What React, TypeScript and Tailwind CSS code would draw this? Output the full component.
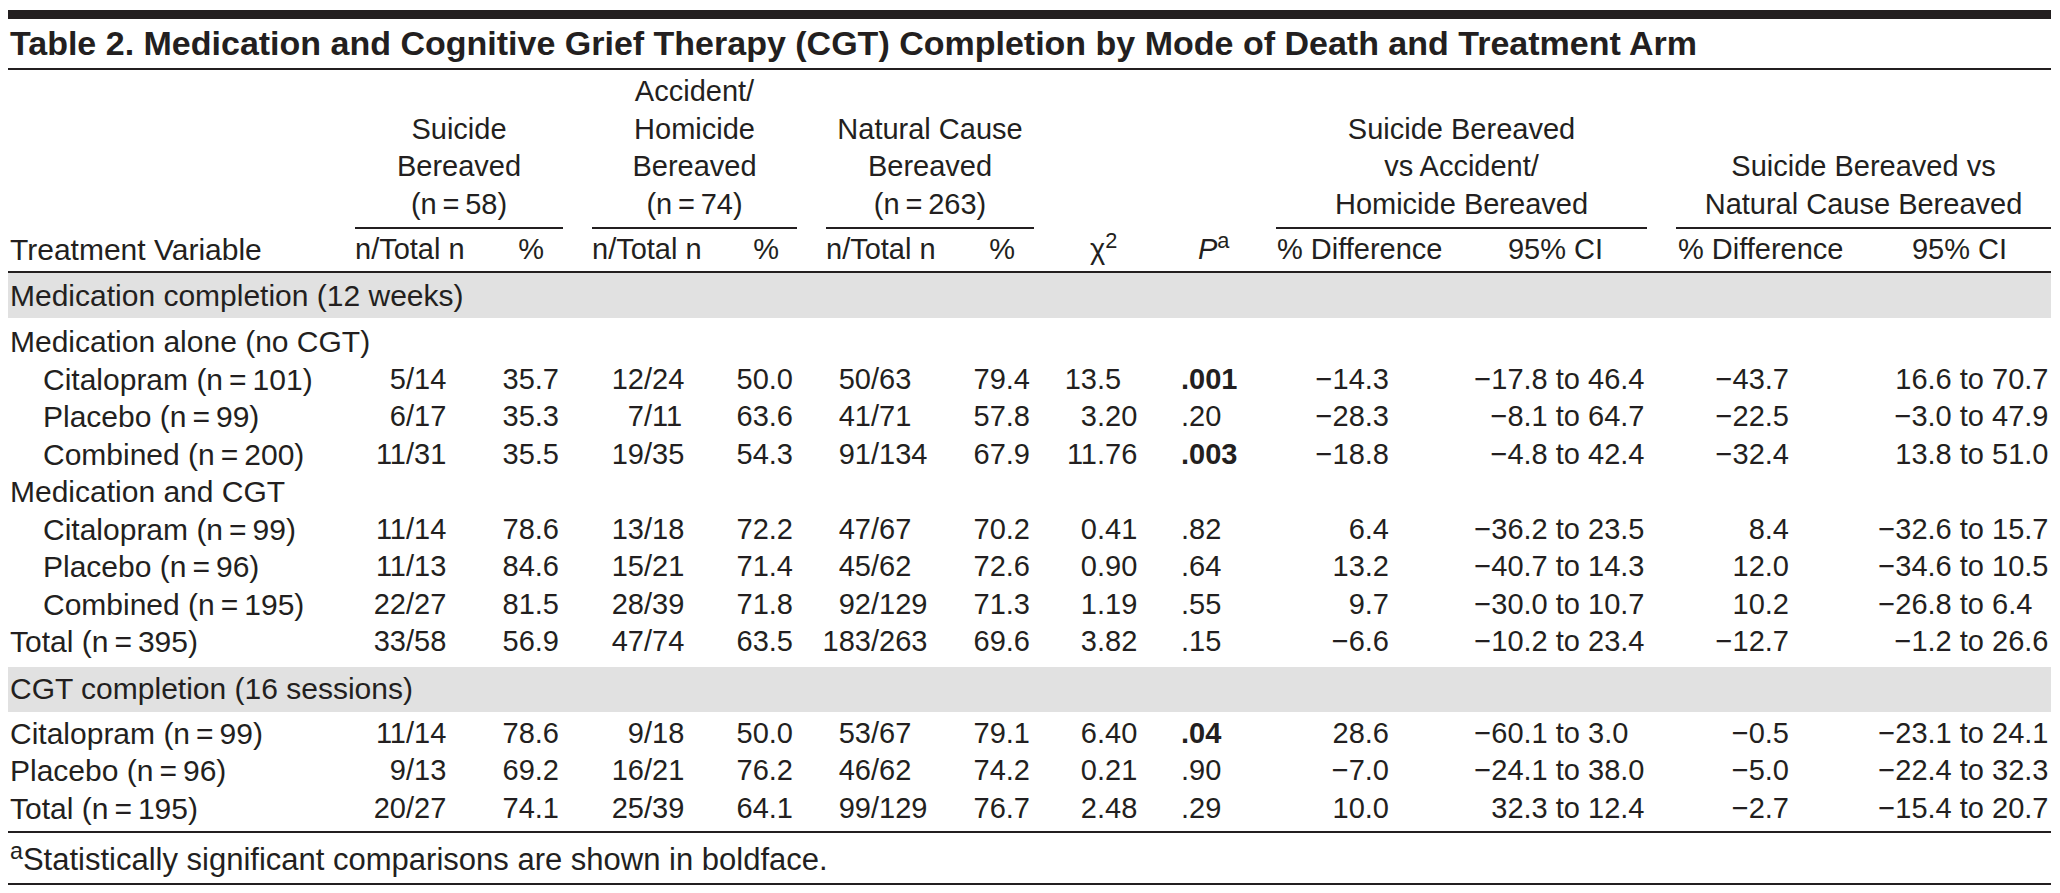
type Row = {
  label: string;
  indent?: boolean;
  v?: string[];
  bold?: boolean;
};

const GRID =
  'grid grid-cols-[347px_115px_93px_29px_116px_89px_29px_115px_93px_116px_126px_184px_187px_29px_179px_196px]';

const section1: Row[] = [
  { label: 'Medication alone (no CGT)' },
  { label: 'Citalopram (n\u2009=\u2009101)', indent: true, bold: true, v: ['5/14', '35.7', '12/24', '50.0', '50/63', '79.4', '13.5', '.001', '\u221214.3', '\u221217.8 to 46.4', '\u221243.7', '16.6 to 70.7'] },
  { label: 'Placebo (n\u2009=\u200999)', indent: true, v: ['6/17', '35.3', '7/11', '63.6', '41/71', '57.8', '3.20', '.20', '\u221228.3', '\u22128.1 to 64.7', '\u221222.5', '\u22123.0 to 47.9'] },
  { label: 'Combined (n\u2009=\u2009200)', indent: true, bold: true, v: ['11/31', '35.5', '19/35', '54.3', '91/134', '67.9', '11.76', '.003', '\u221218.8', '\u22124.8 to 42.4', '\u221232.4', '13.8 to 51.0'] },
  { label: 'Medication and CGT' },
  { label: 'Citalopram (n\u2009=\u200999)', indent: true, v: ['11/14', '78.6', '13/18', '72.2', '47/67', '70.2', '0.41', '.82', '6.4', '\u221236.2 to 23.5', '8.4', '\u221232.6 to 15.7'] },
  { label: 'Placebo (n\u2009=\u200996)', indent: true, v: ['11/13', '84.6', '15/21', '71.4', '45/62', '72.6', '0.90', '.64', '13.2', '\u221240.7 to 14.3', '12.0', '\u221234.6 to 10.5'] },
  { label: 'Combined (n\u2009=\u2009195)', indent: true, v: ['22/27', '81.5', '28/39', '71.8', '92/129', '71.3', '1.19', '.55', '9.7', '\u221230.0 to 10.7', '10.2', '\u221226.8 to 6.4'] },
  { label: 'Total (n\u2009=\u2009395)', v: ['33/58', '56.9', '47/74', '63.5', '183/263', '69.6', '3.82', '.15', '\u22126.6', '\u221210.2 to 23.4', '\u221212.7', '\u22121.2 to 26.6'] },
];

const section2: Row[] = [
  { label: 'Citalopram (n\u2009=\u200999)', bold: true, v: ['11/14', '78.6', '9/18', '50.0', '53/67', '79.1', '6.40', '.04', '28.6', '\u221260.1 to 3.0', '\u22120.5', '\u221223.1 to 24.1'] },
  { label: 'Placebo (n\u2009=\u200996)', v: ['9/13', '69.2', '16/21', '76.2', '46/62', '74.2', '0.21', '.90', '\u22127.0', '\u221224.1 to 38.0', '\u22125.0', '\u221222.4 to 32.3'] },
  { label: 'Total (n\u2009=\u2009195)', v: ['20/27', '74.1', '25/39', '64.1', '99/129', '76.7', '2.48', '.29', '10.0', '32.3 to 12.4', '\u22122.7', '\u221215.4 to 20.7'] },
];

const Frac = ({ v, w }: { v: string; w: string }) => {
  const [a, b] = v.split('/');
  return (
    <div className="flex whitespace-nowrap">
      <span className={`flex shrink-0 justify-end ${w}`}>{a}</span>
      <span>/{b}</span>
    </div>
  );
};

const Dec = ({ v }: { v: string }) => {
  const i = v.indexOf('.');
  return (
    <div className="flex whitespace-nowrap">
      <span className="flex w-[63px] shrink-0 justify-end">{v.slice(0, i)}</span>
      <span>{v.slice(i)}</span>
    </div>
  );
};

const Ci = ({ v, w }: { v: string; w: string }) => {
  const [a, b] = v.split(' to ');
  return (
    <div className="flex whitespace-nowrap">
      <span className={`flex shrink-0 justify-end ${w}`}>{a} to</span>
      <span className="pl-[8px]">{b}</span>
    </div>
  );
};

const DataRow = ({ row }: { row: Row }) => {
  const v = row.v;
  return (
    <div className={`${GRID} h-[37.5px] items-center whitespace-nowrap`}>
      <div className={row.indent ? 'pl-[35px] text-[30px]' : 'pl-[2px] text-[30px]'}>{row.label}</div>
      {v && (
        <>
          <Frac v={v[0]} w="w-[51px]" />
          <div className="pr-1 text-right">{v[1]}</div>
          <div />
          <Frac v={v[2]} w="w-[52px]" />
          <div className="pr-1 text-right">{v[3]}</div>
          <div />
          <Frac v={v[4]} w="w-[45px]" />
          <div className="pr-1 text-right">{v[5]}</div>
          <Dec v={v[6]} />
          <div className={row.bold ? 'pl-[31px] font-bold' : 'pl-[31px]'}>{v[7]}</div>
          <div className="pr-[71px] text-right">{v[8]}</div>
          <Ci v={v[9]} w="w-[120px]" />
          <div />
          <div className="pr-[66px] text-right">{v[10]}</div>
          <Ci v={v[11]} w="w-[129px]" />
        </>
      )}
    </div>
  );
};

const Band = ({ text }: { text: string }) => (
  <div className="flex h-[45px] items-center bg-[#e1e1e1] pl-[2px] text-[30px]">{text}</div>
);

const Spanner = ({ lines }: { lines: string[] }) => (
  <div className="col-span-2 flex h-[156px] flex-col items-center justify-end border-b-2 border-[#231f20] pb-[4px]">
    {lines.map((l) => (
      <span key={l}>{l}</span>
    ))}
  </div>
);

export default function App() {
  return (
    <div className="min-h-screen bg-white pt-[10px] font-['Liberation_Sans',Arial,sans-serif] text-[29px] leading-[37.5px] text-[#231f20]">
      <div className="ml-[8px] w-[2043px]">
        <div className="h-[9px] bg-[#231f20]" />
        <div className="flex h-[49px] items-center whitespace-nowrap pl-[2px] text-[34px] font-bold">
          Table 2. Medication and Cognitive Grief Therapy (CGT) Completion by Mode of Death and Treatment Arm
        </div>
        <div className="h-[2px] bg-[#231f20]" />

        {/* spanner heads */}
        <div className={`${GRID} pt-[3px] whitespace-nowrap`}>
          <div />
          <Spanner lines={['Suicide', 'Bereaved', '(n\u2009=\u200958)']} />
          <div />
          <Spanner lines={['Accident/', 'Homicide', 'Bereaved', '(n\u2009=\u200974)']} />
          <div />
          <Spanner lines={['Natural Cause', 'Bereaved', '(n\u2009=\u2009263)']} />
          <div />
          <div />
          <Spanner lines={['Suicide Bereaved', 'vs Accident/', 'Homicide Bereaved']} />
          <div />
          <Spanner lines={['Suicide Bereaved vs', 'Natural Cause Bereaved']} />
        </div>

        {/* column heads */}
        <div className={`${GRID} h-[44px] items-center whitespace-nowrap border-b-2 border-[#231f20]`}>
          <div className="pl-[2px] text-[30px]">Treatment Variable</div>
          <div>n/Total n</div>
          <div className="pr-[19px] text-right">%</div>
          <div />
          <div>n/Total n</div>
          <div className="pr-[18px] text-right">%</div>
          <div />
          <div>n/Total n</div>
          <div className="pr-[19px] text-right">%</div>
          <div className="pl-[56px]">
            χ<sup>2</sup>
          </div>
          <div className="pl-[48px]">
            <span className="italic">P</span>
            <sup>a</sup>
          </div>
          <div className="pl-px">% Difference</div>
          <div className="pr-[44px] text-right">95% CI</div>
          <div />
          <div className="pl-[2px]">% Difference</div>
          <div className="pr-[44px] text-right">95% CI</div>
        </div>

        <Band text="Medication completion (12 weeks)" />
        <div className="pt-[5px]">
          {section1.map((r, i) => (
            <DataRow key={i} row={r} />
          ))}
        </div>

        <div className="mt-[6px]">
          <Band text="CGT completion (16 sessions)" />
        </div>
        <div className="pt-[3px]">
          {section2.map((r, i) => (
            <DataRow key={i} row={r} />
          ))}
        </div>

        <div className="mt-[4px] h-[2px] bg-[#231f20]" />
        <div className="flex h-[50px] items-center whitespace-nowrap pl-[2px] pt-[4px] text-[31px]">
          <span>
            <sup>a</sup>Statistically significant comparisons are shown in boldface.
          </span>
        </div>
        <div className="h-[2px] bg-[#231f20]" />
      </div>
    </div>
  );
}
